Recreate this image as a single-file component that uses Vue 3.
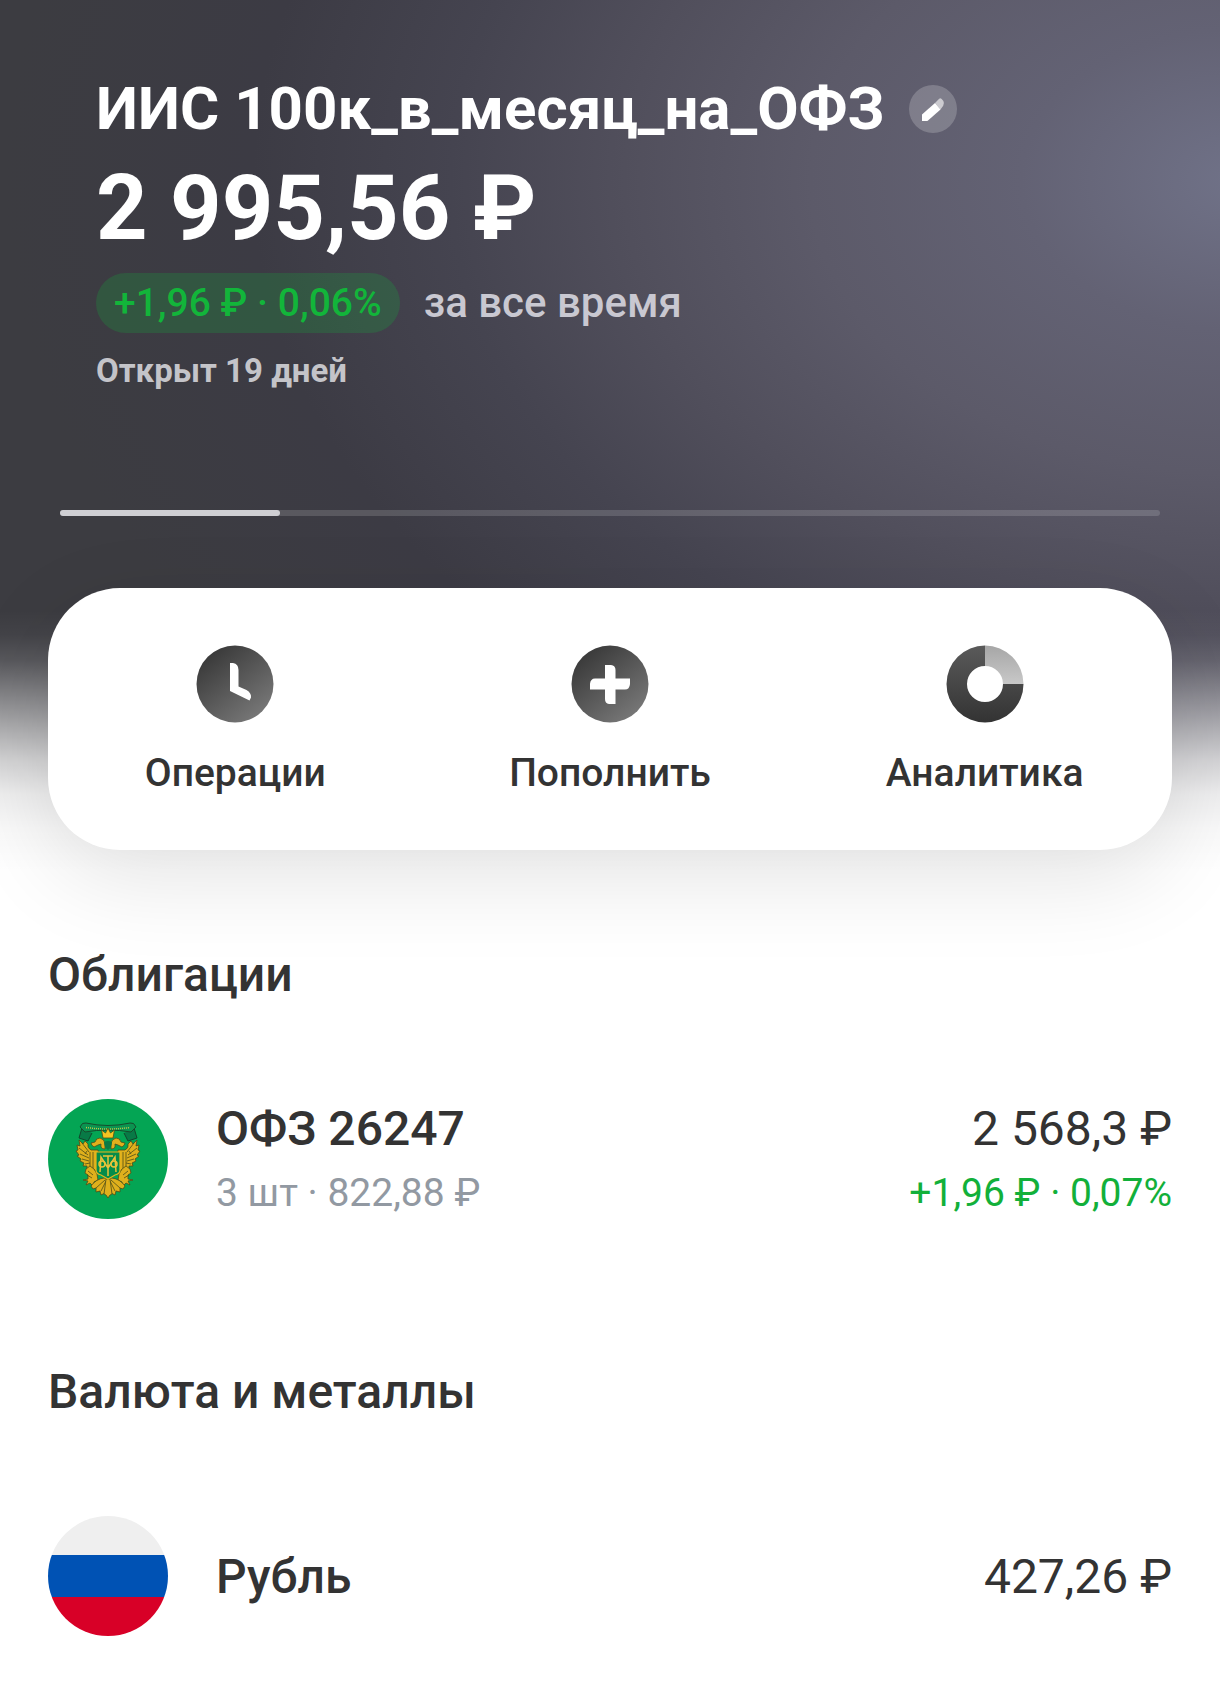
<script setup>
const account = {
  name: 'ИИС 100к_в_месяц_на_ОФЗ',
  balance: '2 995,56 ₽',
  profit: '+1,96 ₽ · 0,06%',
  period: 'за все время',
  opened: 'Открыт 19 дней',
}

const carousel = { page: 1, pages: 5 }

const actions = [
  { id: 'history', label: 'Операции' },
  { id: 'deposit', label: 'Пополнить' },
  { id: 'analytics', label: 'Аналитика' },
]

const groups = [
  {
    title: 'Облигации',
    items: [
      {
        logo: 'minfin',
        name: 'ОФЗ 26247',
        details: '3 шт · 822,88 ₽',
        total: '2 568,3 ₽',
        profit: '+1,96 ₽ · 0,07%',
      },
    ],
  },
  {
    title: 'Валюта и металлы',
    items: [{ logo: 'ruble', name: 'Рубль', total: '427,26 ₽' }],
  },
]
</script>

<template>
  <main class="page">
    <header class="hero">
      <div class="summary">
        <div class="title-row">
          <h1 class="title">{{ account.name }}</h1>
          <button class="edit" type="button" aria-label="Изменить название">
            <svg viewBox="0 0 48 48" aria-hidden="true">
              <path d="M13 36v-6.500l13-11.500 5.500 6.500-12.500 11q-.7.5-1.500.5z" fill="#fff" />
              <path d="M26 18l4.200-4.200q1-1 2.200 0l2 2.200q1.200 2.300-.2 4.800l-2.700 3.700z" fill="#fff" opacity=".6" />
            </svg>
          </button>
        </div>
        <p class="balance">{{ account.balance }}</p>
        <div class="profit-row">
          <span class="badge">{{ account.profit }}</span>
          <span class="period">{{ account.period }}</span>
        </div>
        <p class="opened">{{ account.opened }}</p>
      </div>

      <div class="pager">
        <div class="pager-current" :style="{ width: (carousel.page / carousel.pages) * 100 + '%' }"></div>
      </div>

      <nav class="actions">
        <button v-for="action in actions" :key="action.id" class="action" type="button">
          <svg class="action-icon" viewBox="0 0 78 78" aria-hidden="true">
            <defs>
              <linearGradient id="shade" x1="0.100" y1="0" x2="0.900" y2="1">
                <stop offset="0.100" stop-color="#3a3a3a" />
                <stop offset="1" stop-color="#7e7e7e" />
              </linearGradient>
              <linearGradient id="ring" x1="0" y1="0" x2="0" y2="1">
                <stop offset="0" stop-color="#5a5a5a" />
                <stop offset="1" stop-color="#333" />
              </linearGradient>
              <linearGradient id="slice" x1="0" y1="0" x2="0" y2="1">
                <stop offset="0" stop-color="#a6a6a6" />
                <stop offset="1" stop-color="#c8c8c8" />
              </linearGradient>
            </defs>
            <template v-if="action.id === 'history'">
              <circle cx="39" cy="39" r="38.500" fill="url(#shade)" />
              <path d="M34 18h3q5.500 1 5.500 7v16.500l8 3.500q5 3 4.500 7.500l-1.500 3L34 46z" fill="#fff" />
            </template>
            <template v-else-if="action.id === 'deposit'">
              <circle cx="39" cy="39" r="38.500" fill="url(#shade)" />
              <path d="M34 20h6q4.500.5 4.500 5v8.500H59V39q-.5 5.500-5 5.500h-9.500V59H38q-4-.5-4-5v-9.500H19V39q.5-5.500 5-5.500h10z" fill="#fff" />
            </template>
            <template v-else>
              <path d="M39 .5A38.500 38.500 0 1 0 77.500 39H57a18 18 0 1 1-18-18z" fill="url(#ring)" />
              <path d="M39 .5A38.500 38.500 0 0 1 77.500 39H57a18 18 0 0 0-18-18z" fill="url(#slice)" />
            </template>
          </svg>
          <span>{{ action.label }}</span>
        </button>
      </nav>
    </header>

    <section v-for="group in groups" :key="group.title" class="group">
      <h2 class="group-title">{{ group.title }}</h2>
      <ul class="assets">
        <li v-for="item in group.items" :key="item.name" class="asset">
          <svg v-if="item.logo === 'minfin'" class="logo" viewBox="0 0 120 120" aria-hidden="true">
            <circle cx="60" cy="60" r="60" fill="#04a554" />
            <!-- ribbon -->
            <path d="M34 29l-3 10 9 3 4-8M86 29l3 10-9 3-4-8" fill="#087a46" stroke="#12452b" stroke-width="1" />
            <path d="M32 28q2-5 6-4 22 5 44 0 4-1 6 4l-5 5q-23-4-46 0z" fill="#0b9450" stroke="#164b2c" stroke-width="1" />
            <path d="M38 28.500q22 3 44 0" fill="none" stroke="#bfc64a" stroke-width="1.500" stroke-dasharray="1 1" />
            <g fill="#dfb01c" stroke="#4d4c18" stroke-width="0.800" stroke-linejoin="round">
              <g id="half">
                <!-- wing -->
                <path d="M50 51h-7q-4-2-3-6l-3-3-2 3-4-4 1 6-3-1 1 5-2 1 3 4-2 1 4 3-1 2 4 2-1 3 4 0 0 3 4-1 5 3 4-2z" />
                <path d="M34 44l7 9M31 49l9 7M32 55l9 4M34 60l7 2M37 65l5-1M42 53v14M45 53v16M39 52l-2 3" fill="none" />
                <!-- head -->
                <path d="M57 50q-5 0-4-5l-3 1-4 2q-3-2-3-4l4-1q1-4 5-4 4 1 5 5z" />
                <!-- leg and claw -->
                <path d="M46 70l-4-3-4 3-1 4 3 2 0 4-5 1 5 1-2 4 4-2 3 3 1-4 4-2-1-6z" />
                <path d="M40 72l5 4M39 76l5 3" fill="none" />
                <!-- tail feathers -->
                <path d="M56 79q-8 1-13 8l2 3 3-1 0 4 4-1 1 4 4-2 3 2V80z" />
                <path d="M57 81l-9 8M58 82l-5 10M59 82l-2 12" fill="none" />
              </g>
              <use href="#half" transform="matrix(-1 0 0 1 120 0)" />
              <!-- crown -->
              <path d="M55 39l-1.500-8 4 3 2.500-5 2.500 5 4-3-1.500 8z" fill="#f4c421" />
              <path d="M58 80h4l2 15-2 1-2 3-2-3-2-1z" />
            </g>
            <path d="M56 43q4-2 8 0 0 5-4 8-4-3-4-8z" fill="#087a46" />
            <!-- shield -->
            <path d="M48 53h24v18q0 4-5 5l-7 4-7-4q-5-1-5-5z" fill="#058c4a" stroke="#e9b51b" stroke-width="1.200" />
            <g fill="none" stroke="#e9c33a" stroke-width="1.500">
              <path d="M52 73l1-15 7 11 7-11 1 15M60 57v20M55 57h10" />
              <circle cx="54" cy="65" r="3" />
              <circle cx="66" cy="65" r="3" />
            </g>
          </svg>
          <svg v-else class="logo" viewBox="0 0 120 120" aria-hidden="true">
            <clipPath id="disc"><circle cx="60" cy="60" r="60" /></clipPath>
            <g clip-path="url(#disc)">
              <path d="M0 0h120v39H0z" fill="#efefef" />
              <path d="M0 39h120v42H0z" fill="#0052b4" />
              <path d="M0 81h120v39H0z" fill="#d80027" />
            </g>
          </svg>
          <div class="info">
            <span class="name">{{ item.name }}</span>
            <span v-if="item.details" class="details">{{ item.details }}</span>
          </div>
          <div class="info value">
            <span class="total">{{ item.total }}</span>
            <span v-if="item.profit" class="details gain">{{ item.profit }}</span>
          </div>
        </li>
      </ul>
    </section>
  </main>
</template>

<style>
body {
  margin: 0;
  background: #fff;
}
</style>

<style scoped>
.page {
  padding-bottom: 69px;
  color: #333;
  font-family: Roboto, 'Noto Sans', sans-serif;
}

h1,
h2,
p,
ul {
  margin: 0;
  padding: 0;
}

button {
  padding: 0;
  border: 0;
  color: inherit;
  font-family: inherit;
  cursor: pointer;
}

.hero {
  padding: 73px 48px 30px;
  background:
    linear-gradient(
      to bottom,
      rgba(255, 255, 255, 0) calc(100% - 270px),
      rgba(255, 255, 255, 0.04) calc(100% - 245px),
      rgba(255, 255, 255, 0.14) calc(100% - 220px),
      rgba(255, 255, 255, 0.4) calc(100% - 180px),
      rgba(255, 255, 255, 0.59) calc(100% - 150px),
      rgba(255, 255, 255, 0.77) calc(100% - 120px),
      rgba(255, 255, 255, 0.91) calc(100% - 86px),
      rgba(255, 255, 255, 0.97) calc(100% - 52px),
      #fff calc(100% - 10px)
    ),
    radial-gradient(
      ellipse 1240px 840px at 102% 180px,
      #707288 0%,
      #636274 18%,
      #5c5a69 35%,
      #514f5c 50%,
      #454450 64%,
      #3c3b44 80%,
      #3c3c41 100%
    );
}

.summary {
  display: flex;
  flex-direction: column;
  gap: 12px;
  padding: 0 48px;
  color: #fff;
}

.title-row {
  display: flex;
  align-items: center;
  gap: 24px;
}

.title {
  font-size: 60px;
  font-weight: 700;
  line-height: 72px;
}

.edit {
  flex: none;
  width: 48px;
  height: 48px;
  border-radius: 50%;
  background: rgba(255, 255, 255, 0.2);
}

.edit svg {
  display: block;
}

.balance {
  font-size: 90px;
  font-weight: 700;
  line-height: 104px;
}

.profit-row {
  display: flex;
  align-items: center;
  gap: 24px;
  line-height: 60px;
}

.badge {
  padding: 0 18px;
  border-radius: 30px;
  background: rgba(20, 180, 60, 0.22);
  color: #12b53a;
  font-size: 39px;
  font-weight: 500;
}

.period {
  color: #c9c8d1;
  font-size: 42px;
  font-weight: 500;
}

.opened {
  color: #c4c4c9;
  font-size: 33px;
  font-weight: 700;
  line-height: 52px;
}

.pager {
  height: 6px;
  margin: 113px 12px 72px;
  border-radius: 3px;
  background: rgba(255, 255, 255, 0.15);
}

.pager-current {
  height: 6px;
  border-radius: 3px;
  background: #cfcfd3;
}

.actions {
  display: grid;
  grid-template-columns: repeat(3, 1fr);
  padding: 57px 0 53px;
  border-radius: 72px;
  background: #fff;
  box-shadow: 0 28px 92px rgba(0, 0, 0, 0.11);
}

.action {
  display: flex;
  flex-direction: column;
  align-items: center;
  gap: 26px;
  background: none;
  font-size: 39px;
  font-weight: 500;
  line-height: 48px;
}

.action-icon {
  width: 78px;
  height: 78px;
}

.group {
  padding: 67px 48px 0;
}

.group + .group {
  padding-top: 143px;
}

.group-title {
  font-size: 48px;
  font-weight: 500;
  line-height: 56px;
}

.assets {
  padding-top: 96px;
  list-style: none;
}

.asset {
  display: flex;
  align-items: flex-start;
  gap: 48px;
}

.logo {
  flex: none;
  width: 120px;
  height: 120px;
}

.info {
  display: flex;
  flex-direction: column;
  justify-content: center;
  gap: 8px;
  box-sizing: border-box;
  min-height: 120px;
  padding-top: 2px;
  line-height: 56px;
}

.value {
  align-items: flex-end;
  margin-left: auto;
}

.name,
.total {
  font-size: 48px;
}

.name {
  font-weight: 500;
}

.details {
  color: #9299a2;
  font-size: 39px;
}

.gain {
  color: #12b03a;
}
</style>
